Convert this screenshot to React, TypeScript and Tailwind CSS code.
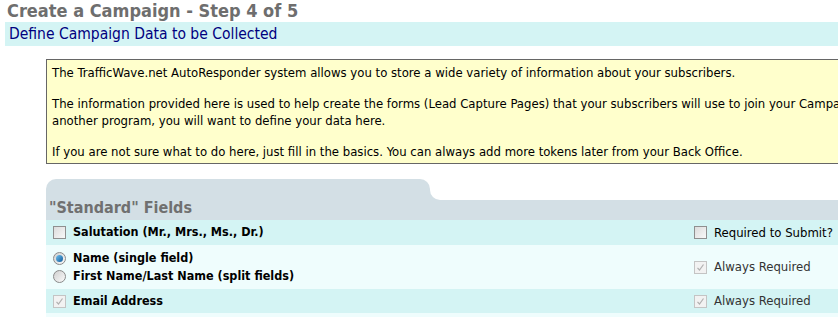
import React from 'react';

const font = { fontFamily: '"DejaVu Sans Condensed", "DejaVu Sans", sans-serif' };

function Box({ checked, disabled }: { checked?: boolean; disabled?: boolean }) {
  return (
    <span
      className={`inline-flex items-center justify-center w-[13px] h-[13px] border shrink-0 ${
        disabled ? 'border-[#c4c4c4] bg-[#f2f2f2]' : 'border-[#8f8f8f] bg-gradient-to-br from-[#dcdcdc] to-[#f8f8f8]'
      }`}
    >
      {checked && (
        <svg width="9" height="9" viewBox="0 0 9 9">
          <path d="M1.5 4.8 L3.5 7 L7.5 1.5" fill="none" stroke="#b0b0b0" strokeWidth="1.2" />
        </svg>
      )}
    </span>
  );
}

function Radio({ checked }: { checked?: boolean }) {
  return (
    <span className="inline-flex items-center justify-center w-[13px] h-[13px] rounded-full border border-[#8a8a8a] bg-gradient-to-br from-[#d0d0d0] to-[#fafafa] shrink-0">
      {checked && <span className="w-[7px] h-[7px] rounded-full bg-gradient-to-br from-[#6fc0ee] to-[#0a5c9c]" />}
    </span>
  );
}

function Row({ tone, children, right }: { tone: 'dark' | 'light'; children: React.ReactNode; right: React.ReactNode }) {
  return (
    <div className={`flex items-center justify-between pl-[7px] ${tone === 'dark' ? 'bg-[#d4f4f4]' : 'bg-[#effdfd]'}`}>
      <div className="flex flex-col">{children}</div>
      <div className="w-[144px] shrink-0 whitespace-nowrap">{right}</div>
    </div>
  );
}

export default function App() {
  return (
    <div className="w-[838px] h-[317px] overflow-hidden bg-white text-black" style={font}>
      <h1 className="pl-[7px] h-[22px] text-[18px] leading-[22px] font-bold text-[#6e6e6e]">
        Create a Campaign - Step 4 of 5
      </h1>
      <div className="ml-[5px] h-[24px] bg-[#d4f4f4] pl-[4px] text-[15.5px] leading-[24px] text-[#000080]">
        Define Campaign Data to be Collected
      </div>

      <div className="ml-[46px] mt-[13px] w-[900px] border border-[#666666] bg-[#ffffcc] pt-[4px] pb-[3px] pl-[5px] text-[13px] leading-[17px] whitespace-nowrap overflow-hidden">
        <p>The TrafficWave.net AutoResponder system allows you to store a wide variety of information about your subscribers.</p>
        <p className="mt-[14px]">
          The information provided here is used to help create the forms (Lead Capture Pages) that your subscribers will use to join your Campaign.
          <br />
          another program, you will want to define your data here.
        </p>
        <p className="mt-[14px]">If you are not sure what to do here, just fill in the basics. You can always add more tokens later from your Back Office.</p>
      </div>

      <div className="ml-[46px] mt-[15px]">
        <div className="flex">
          <div className="w-[384px] h-[21px] bg-[#d3dfe5] rounded-tl-[10px] rounded-tr-[10px]" />
          <div className="flex-1 bg-[#d3dfe5]">
            <div className="h-[21px] bg-white rounded-bl-[10px]" />
          </div>
        </div>
        <div className="h-[20px] bg-[#d3dfe5] pl-[3px] text-[16px] leading-[16px] font-bold text-[#707070]">"Standard" Fields</div>

        <div className="text-[12.5px] font-bold">
          <Row
            tone="dark"
            right={
              <label className="flex items-center gap-[7px] font-normal text-[13px]">
                <Box />
                <span>Required to Submit?</span>
              </label>
            }
          >
            <label className="flex items-center gap-[7px] h-[25px]">
              <Box />
              <span>Salutation (Mr., Mrs., Ms., Dr.)</span>
            </label>
          </Row>
          <Row
            tone="light"
            right={
              <label className="flex items-center gap-[7px] font-normal text-[13px] text-[#333]">
                <Box checked disabled />
                <span>Always Required</span>
              </label>
            }
          >
            <div className="py-[4px]">
              <label className="flex items-center gap-[7px] h-[18px]">
                <Radio checked />
                <span>Name (single field)</span>
              </label>
              <label className="flex items-center gap-[7px] h-[18px]">
                <Radio />
                <span>First Name/Last Name (split fields)</span>
              </label>
            </div>
          </Row>
          <Row
            tone="dark"
            right={
              <label className="flex items-center gap-[7px] font-normal text-[13px] text-[#333]">
                <Box checked disabled />
                <span>Always Required</span>
              </label>
            }
          >
            <label className="flex items-center gap-[7px] h-[24px]">
              <Box checked disabled />
              <span>Email Address</span>
            </label>
          </Row>
          <div className="h-[10px] bg-[#effdfd]" />
        </div>
      </div>
    </div>
  );
}
